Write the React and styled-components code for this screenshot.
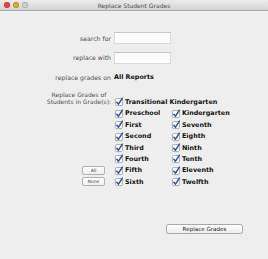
import React from "react";
import styled, { createGlobalStyle } from "styled-components";

const GlobalStyle = createGlobalStyle`
  html, body {
    margin: 0;
    padding: 0;
    background: #ededed;
  }
  body {
    font-family: "DejaVu Sans", "Liberation Sans", sans-serif;
  }
`;

const Window = styled.div`
  width: 268px;
  height: 259px;
  background: #eeeeee;
  display: flex;
  flex-direction: column;
  overflow: hidden;
`;

const TitleBar = styled.div`
  flex: none;
  height: 10px;
  display: grid;
  grid-template-columns: 1fr auto 1fr;
  align-items: center;
  background: linear-gradient(#ececec, #d4d4d4);
  border-bottom: 1px solid #a9a9a9;
`;

const Lights = styled.div`
  display: flex;
  gap: 3px;
  padding-left: 4px;
`;

const Light = styled.span`
  width: 6px;
  height: 6px;
  border-radius: 50%;
  background: ${(p) => p.$color};
  box-shadow: inset 0 0 0 0.5px rgba(0, 0, 0, 0.25);
`;

const Title = styled.div`
  font-size: 6px;
  color: #4a4a4a;
  white-space: nowrap;
`;

const Content = styled.div`
  padding-top: 21px;
`;

const TopForm = styled.div`
  display: grid;
  grid-template-columns: 111px 57px;
  grid-auto-rows: 12px;
  column-gap: 3px;
  row-gap: 7.5px;
  align-items: center;
`;

const Label = styled.div`
  text-align: right;
  font-size: 6.2px;
  color: #4f4f4f;
  white-space: nowrap;
`;

const Input = styled.div`
  height: 12px;
  box-sizing: border-box;
  background: #fcfcfc;
  border: 1px solid #dadada;
  border-top-color: #c6c6c6;
`;

const Value = styled.div`
  font-size: 6.4px;
  font-weight: bold;
  color: #111;
  white-space: nowrap;
`;

const GradesGrid = styled.div`
  margin-top: 6.3px;
  display: grid;
  grid-template-columns: 115px 57px auto;
  grid-template-rows: 18.4px repeat(7, 11.4px);
`;

const GradeLabel = styled.div`
  grid-column: 1;
  grid-row: 1;
  justify-self: end;
  align-self: center;
  padding-right: 4px;
  text-align: center;
  font-size: 6px;
  line-height: 7px;
  color: #4f4f4f;
  white-space: nowrap;
`;

const Check = styled.label`
  grid-column: ${(p) => p.$col};
  grid-row: ${(p) => p.$row};
  align-self: end;
  height: 11.4px;
  display: flex;
  align-items: center;
  gap: 2px;
  font-size: 6.4px;
  font-weight: bold;
  color: #111;
  white-space: nowrap;
`;

const SmallButton = styled.div`
  grid-column: 1;
  grid-row: ${(p) => p.$row};
  justify-self: end;
  align-self: center;
  margin-right: 10px;
  width: 23px;
  height: 8.5px;
  box-sizing: border-box;
  border: 1px solid #b2b2b2;
  border-radius: 2px;
  background: linear-gradient(#fdfdfd, #efefef);
  display: flex;
  align-items: center;
  justify-content: center;
  font-size: 4.5px;
  color: #444;
`;

const Footer = styled.div`
  margin-top: 36.5px;
  display: flex;
  justify-content: flex-end;
  padding-right: 25px;
`;

const Button = styled.div`
  width: 77px;
  height: 10px;
  box-sizing: border-box;
  border: 1px solid #a8a8a8;
  border-radius: 2.5px;
  background: linear-gradient(#fefefe, #eeeeee);
  display: flex;
  align-items: center;
  justify-content: center;
  font-size: 5.6px;
  color: #222;
`;

const CheckBox = () => (
  <svg width="8" height="9" viewBox="0 0 8 9" style={{ flex: "none", overflow: "visible" }}>
    <rect x="0.4" y="1.6" width="7" height="7" rx="1.2" fill="#fff" stroke="#8c8c8c" strokeWidth="0.7" />
    <path d="M1.8 5.2 L3.5 7.2 L7.4 1.2" fill="none" stroke="#2a579f" strokeWidth="1.5" strokeLinecap="round" strokeLinejoin="round" />
  </svg>
);

const left = ["Preschool", "First", "Second", "Third", "Fourth", "Fifth", "Sixth"];
const right = ["Kindergarten", "Seventh", "Eighth", "Ninth", "Tenth", "Eleventh", "Twelfth"];

export default function App() {
  return (
    <>
      <GlobalStyle />
      <Window>
        <TitleBar>
          <Lights>
            <Light $color="#e2463f" />
            <Light $color="#e1a52d" />
            <Light $color="#cdcdcd" />
          </Lights>
          <Title>Replace Student Grades</Title>
          <span />
        </TitleBar>
        <Content>
          <TopForm>
            <Label>search for</Label>
            <Input />
            <Label>replace with</Label>
            <Input />
            <Label>replace grades on</Label>
            <Value>All Reports</Value>
          </TopForm>
          <GradesGrid>
            <GradeLabel>
              Replace Grades of
              <br />
              Students in Grade(s):
            </GradeLabel>
            <Check $col="2 / span 2" $row={1}>
              <CheckBox />
              Transitional Kindergarten
            </Check>
            {left.map((g, i) => (
              <Check key={g} $col={2} $row={i + 2}>
                <CheckBox />
                {g}
              </Check>
            ))}
            {right.map((g, i) => (
              <Check key={g} $col={3} $row={i + 2}>
                <CheckBox />
                {g}
              </Check>
            ))}
            <SmallButton $row={7}>All</SmallButton>
            <SmallButton $row={8}>None</SmallButton>
          </GradesGrid>
          <Footer>
            <Button>Replace Grades</Button>
          </Footer>
        </Content>
      </Window>
    </>
  );
}
